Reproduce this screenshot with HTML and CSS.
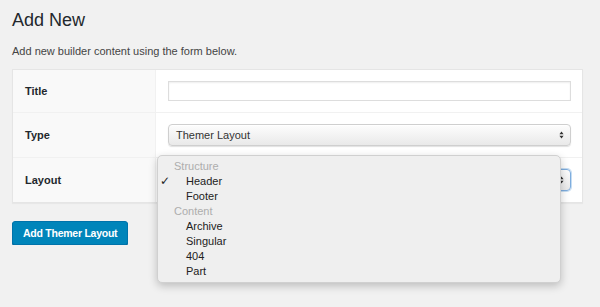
FILE: index.html
```html
<!DOCTYPE html>
<html>
<head>
<meta charset="utf-8">
<link rel="stylesheet" href="styles.css">
</head>
<body>
<div class="wrap">
  <h1 class="title">Add New</h1>
  <p class="desc">Add new builder content using the form below.</p>
  <div class="form-table">
    <div class="row row-first">
      <div class="label">Title</div>
      <div class="field"><div class="input"></div></div>
    </div>
    <div class="row">
      <div class="label">Type</div>
      <div class="field">
        <div class="select"><span>Themer Layout</span>
          <svg class="arrows" width="5" height="8" viewBox="0 0 5 8"><path d="M2.5 0.5 L4.6 3.2 H0.4 Z M2.5 7.5 L4.6 4.8 H0.4 Z" fill="#333"/></svg>
        </div>
      </div>
    </div>
    <div class="row">
      <div class="label">Layout</div>
      <div class="field">
        <div class="select focus"><span></span>
          <svg class="arrows" width="5" height="8" viewBox="0 0 5 8"><path d="M2.5 0.5 L4.6 3.2 H0.4 Z M2.5 7.5 L4.6 4.8 H0.4 Z" fill="#333"/></svg>
        </div>
      </div>
    </div>
  </div>
  <button class="button">Add Themer Layout</button>
</div>
<div class="menu">
  <div class="group">Structure</div>
  <div class="item"><span class="check">✓</span>Header</div>
  <div class="item">Footer</div>
  <div class="group">Content</div>
  <div class="item">Archive</div>
  <div class="item">Singular</div>
  <div class="item">404</div>
  <div class="item">Part</div>
</div>
</body>
</html>
```
FILE: styles.css
```css
html, body {
  margin: 0;
  padding: 0;
  background: #f1f1f1;
  font-family: "Liberation Sans", Arial, sans-serif;
  color: #23282d;
}
.wrap {
  padding: 0 17px 0 12px;
}
.title {
  margin: 10px 0 0;
  font-size: 18px;
  line-height: 20px;
  font-weight: 400;
  color: #23282d;
}
.desc {
  margin: 15px 0 0;
  font-size: 11px;
  line-height: 13px;
  color: #444;
}
.form-table {
  margin-top: 11px;
  background: #fff;
  border: 1px solid #e5e5e5;
  box-shadow: 0 1px 1px rgba(0,0,0,.04);
}
.row {
  display: flex;
  border-top: 1px solid #f1f1f1;
}
.row-first {
  border-top: none;
}
.label {
  width: 130px;
  padding: 0 0 0 12px;
  background: #f9f9f9;
  border-right: 1px solid #f1f1f1;
  font-weight: 700;
  font-size: 11px;
  display: flex;
  align-items: center;
}
.field {
  flex: 1;
  padding: 11px 11px 11px 12px;
}
.input {
  height: 18px;
  border: 1px solid #ddd;
  box-shadow: inset 0 1px 2px rgba(0,0,0,.07);
  background: #fff;
}
.select {
  height: 20px;
  border: 1px solid #cfcfcf;
  border-radius: 4px;
  background: linear-gradient(#fdfdfd, #f1f1f1 60%, #e9e9e9);
  box-shadow: 0 1px 1px rgba(0,0,0,.12), inset 0 1px 0 #fff;
  display: flex;
  align-items: center;
  justify-content: space-between;
  padding: 0 6px 0 7px;
  font-size: 11px;
  color: #333;
}
.select.focus {
  border-color: #7eadde;
  box-shadow: 0 0 0 1px rgba(91,157,217,.35);
}
.button {
  margin-top: 18px;
  height: 24px;
  padding: 0 10px;
  background: #0085ba;
  border: 1px solid #0073aa;
  border-radius: 3px;
  box-shadow: 0 1px 0 #006799;
  color: #fff;
  font-family: "Liberation Sans", Arial, sans-serif;
  font-weight: 700;
  font-size: 10.5px;
  letter-spacing: -0.25px;
  line-height: 22px;
}
.menu {
  position: absolute;
  left: 157px;
  top: 155px;
  width: 402px;
  padding: 3px 0 3px;
  background: #efefef;
  border: 1px solid #d0d0d0;
  border-radius: 5px;
  box-shadow: 0 3px 9px rgba(0,0,0,.22);
  font-size: 11px;
}
.group {
  height: 15px;
  line-height: 15px;
  padding-left: 16px;
  color: #adadad;
}
.item {
  position: relative;
  height: 15px;
  line-height: 15px;
  padding-left: 28px;
  color: #222;
}
.check {
  position: absolute;
  left: 2px;
  top: 0;
  font-size: 12px;
  font-family: "DejaVu Sans", sans-serif;
}
```
